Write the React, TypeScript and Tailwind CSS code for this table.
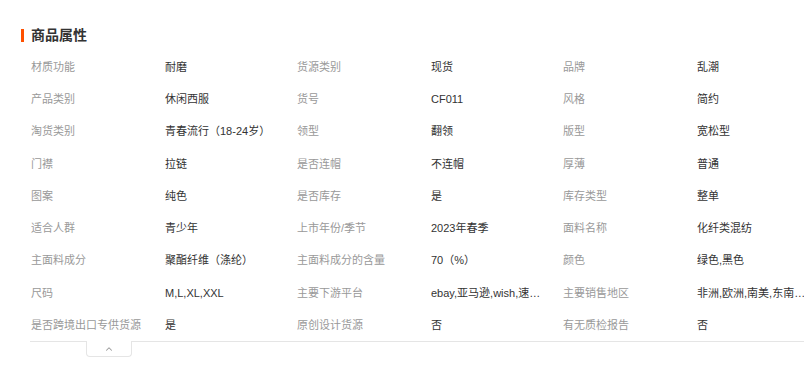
import { ChevronUp } from "lucide-react";

const attrs: [string, string][] = [
  ["材质功能", "耐磨"],
  ["货源类别", "现货"],
  ["品牌", "乱潮"],
  ["产品类别", "休闲西服"],
  ["货号", "CF011"],
  ["风格", "简约"],
  ["淘货类别", "青春流行（18-24岁）"],
  ["领型", "翻领"],
  ["版型", "宽松型"],
  ["门襟", "拉链"],
  ["是否连帽", "不连帽"],
  ["厚薄", "普通"],
  ["图案", "纯色"],
  ["是否库存", "是"],
  ["库存类型", "整单"],
  ["适合人群", "青少年"],
  ["上市年份/季节", "2023年春季"],
  ["面料名称", "化纤类混纺"],
  ["主面料成分", "聚酯纤维（涤纶）"],
  ["主面料成分的含量", "70（%）"],
  ["颜色", "绿色,黑色"],
  ["尺码", "M,L,XL,XXL"],
  ["主要下游平台", "ebay,亚马逊,wish,速卖通,独立站,LAZADA"],
  ["主要销售地区", "非洲,欧洲,南美,东南亚,北美,东北亚,中东"],
  ["是否跨境出口专供货源", "是"],
  ["原创设计货源", "否"],
  ["有无质检报告", "否"],
];

export default function App() {
  return (
    <div
      className="w-[804px] h-[390px] overflow-hidden bg-white"
      style={{ fontFamily: '"Liberation Sans", "Noto Sans CJK SC", sans-serif' }}
    >
      {/* Title */}
      <div className="pt-[25px] pl-[21px] flex items-center h-[45px]">
        <span className="w-[3px] h-[13px] bg-[#ff5000]" />
        <h2 className="ml-[7px] text-[14px] leading-[20px] font-bold text-[#333]">
          商品属性
        </h2>
      </div>

      {/* Attribute grid */}
      <div className="mt-[6px] pl-[31px] grid grid-cols-[266px_266px_266px]">
        {attrs.map(([label, value]) => (
          <div key={label} className="flex items-center h-[32.25px] text-[11px]">
            <span className="w-[134px] shrink-0 text-[#999] truncate">{label}</span>
            <span className="w-[112px] shrink-0 text-[#333] truncate">{value}</span>
          </div>
        ))}
      </div>

      {/* Footer line + collapse toggle */}
      <div className="ml-[30px] border-t border-[#e5e5e5]">
        <button className="ml-[56px] -mt-px w-[46px] h-[16px] border border-t-0 border-[#e5e5e5] rounded-b-[4px] bg-white flex items-center justify-center">
          <ChevronUp className="w-[10px] h-[10px] text-[#999]" strokeWidth={2.5} />
        </button>
      </div>
    </div>
  );
}
